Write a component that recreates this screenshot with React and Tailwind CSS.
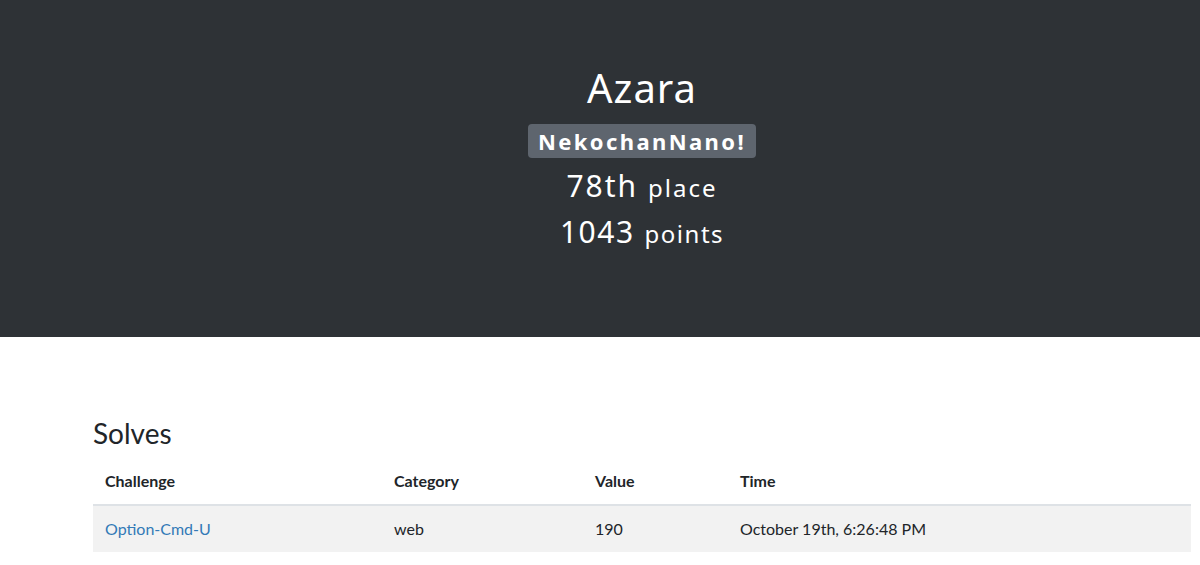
export default function App() {
  const head = { fontFamily: '"Noto Sans", "Open Sans", sans-serif' };
  return (
    <div className="min-h-[565px] bg-white" style={{ fontFamily: 'Lato, "Liberation Sans", sans-serif' }}>
      <div className="h-[337px] bg-[#2e3236] pl-[93px] pr-[9px]">
        <div className="flex flex-col items-center pt-[62px] text-white" style={head}>
          <h1 className="text-[40px] leading-[52px] tracking-[1px] font-normal">Azara</h1>
          <div className="mt-[10px] h-[34px] px-[10px] flex items-center rounded-[4px] bg-[#5e656e] text-[22px] font-bold tracking-[2.4px]">
            NekochanNano!
          </div>
          <div className="mt-[8px] leading-[40px] flex items-baseline">
            <span className="text-[30px] tracking-[2px]">78th</span>
            <span className="ml-[10px] text-[24px] tracking-[2px]">place</span>
          </div>
          <div className="mt-[4px] leading-[40px] flex items-baseline">
            <span className="text-[30px] tracking-[1.5px]">1043</span>
            <span className="ml-[10px] text-[24px] tracking-[1.5px]">points</span>
          </div>
        </div>
      </div>
      <div className="pl-[93px] pr-[9px] pt-[79px]">
        <h3 className="text-[28px] leading-[34px] text-[#212529] mb-[8px]">Solves</h3>
        <table className="w-full text-[16px] text-[#212529] border-collapse">
          <thead>
            <tr className="border-b-2 border-[#dee2e6]">
              <th className="text-left font-bold px-[12px] h-[47px] w-[289px]">Challenge</th>
              <th className="text-left font-bold px-[12px] w-[201px]">Category</th>
              <th className="text-left font-bold px-[12px] w-[145px]">Value</th>
              <th className="text-left font-bold px-[12px]">Time</th>
            </tr>
          </thead>
          <tbody>
            <tr className="bg-[#f2f2f2] h-[47px]">
              <td className="px-[12px] text-[#337ab7]">Option-Cmd-U</td>
              <td className="px-[12px]">web</td>
              <td className="px-[12px]">190</td>
              <td className="px-[12px]">October 19th, 6:26:48 PM</td>
            </tr>
          </tbody>
        </table>
      </div>
    </div>
  );
}
